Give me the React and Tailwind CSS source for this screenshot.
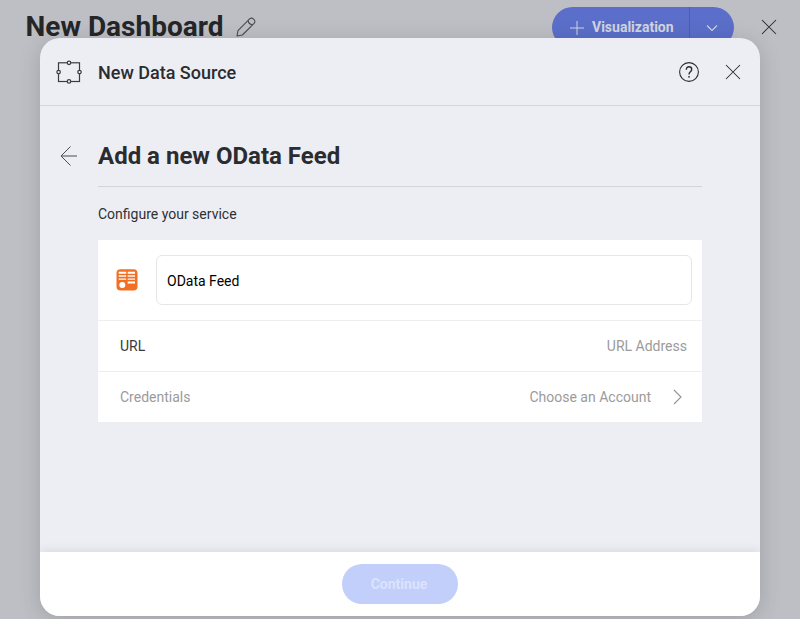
function CloseIcon() {
  return (
    <svg className="size-4 shrink-0" viewBox="0 0 16 16" fill="none" stroke="#2b2c2f" strokeWidth="1.05">
      <path d="M1 1 15 15M15 1 1 15" />
    </svg>
  );
}

function HelpIcon() {
  return (
    <svg className="size-5 shrink-0" viewBox="0 0 20 20" fill="none" stroke="#2b2c2f" strokeWidth="1.1">
      <circle cx="10" cy="10" r="9.400" />
      <path d="M7.300 7.700c0-1.900 1.200-2.900 2.700-2.900s2.700 1 2.700 2.600c0 2.300-2.700 2.300-2.700 5" strokeWidth="1.400" />
      <circle cx="10" cy="14.800" r=".9" fill="#2b2c2f" stroke="none" />
    </svg>
  );
}

function PencilIcon() {
  return (
    <svg className="size-5 shrink-0" viewBox="0 0 20 20" fill="none" stroke="#4b4c50" strokeWidth="1.1" strokeLinejoin="round">
      <path d="M1 19 2 13.6 13.6 1.9a2.6 2.6 0 0 1 3.7 0l.8.8a2.6 2.6 0 0 1 0 3.7L6.4 18 1 19ZM12.2 3.4c.2 2.500 1.800 4.300 4.500 4.400" />
    </svg>
  );
}

function DataSourceIcon() {
  return (
    <svg className="h-6 w-[26px] shrink-0" viewBox="0 0 26 24" stroke="#3b3c40" strokeWidth="1.2">
      <rect x="2.500" y="2.800" width="21" height="18.700" fill="none" />
      <g fill="#edeef4">
        <circle cx="13" cy="2.800" r="1.750" />
        <circle cx="13" cy="21.400" r="1.750" />
        <circle cx="2.600" cy="12.100" r="1.750" />
        <circle cx="23.500" cy="12.100" r="1.750" />
      </g>
    </svg>
  );
}

function FeedIcon() {
  return (
    <svg className="size-[22px] shrink-0" viewBox="0 0 22 22">
      <rect x=".5" y=".2" width="21" height="21.300" rx="4" fill="#f37022" />
      <g fill="#fff">
        <path d="M2.700 2.700h7.500v2H2.700zM2.700 6.300h7.500v1.500H2.700zM2.700 9.500h7.500v1.300H2.700zM11.700 2.700h7.300v2h-7.300zM11.700 6.300h7.300v1.500h-7.300zM11.700 9.500h7.300v1.300h-7.300zM11.700 12.500h7.300v1.900h-7.300z" />
        <circle cx="6.300" cy="15.900" r="3" />
      </g>
    </svg>
  );
}

function Toolbar() {
  return (
    <div className="flex h-[54px] items-center pr-6 pl-[25.500px]">
      <h1 className="text-[28px] leading-none font-bold text-[#252628]">New Dashboard</h1>
      <div className="ml-[13px]">
        <PencilIcon />
      </div>
      <div className="mt-px ml-auto flex h-[41px] w-[182px] overflow-hidden rounded-full bg-[#5b6fca] text-[#d3d5df]">
        <div className="flex w-[138px] items-center border-r border-[#4b5db0] pl-[18px] text-[14px] font-bold">
          <svg className="mr-2 size-3.5 shrink-0" viewBox="0 0 14 14" stroke="currentColor" strokeWidth="1">
            <path d="M7 0v14M0 7h14" />
          </svg>
          Visualization
        </div>
        <div className="flex flex-1 items-center justify-center">
          <svg className="h-1.5 w-3" viewBox="0 0 12 6" fill="none" stroke="currentColor" strokeWidth="1.1">
            <path d="m1 .5 5 5 5-5" />
          </svg>
        </div>
      </div>
      <div className="ml-[27px] w-[15px]">
        <CloseIcon />
      </div>
    </div>
  );
}

function DialogHeader() {
  return (
    <header className="flex h-[68px] items-center border-b border-[#d6d7dc] pr-[19px] pl-4">
      <DataSourceIcon />
      <h2 className="mt-0.5 ml-4 text-[18px] leading-6 font-medium text-[#2b2c2f]">New Data Source</h2>
      <div className="ml-auto">
        <HelpIcon />
      </div>
      <div className="ml-[26px]">
        <CloseIcon />
      </div>
    </header>
  );
}

function Dialog() {
  return (
    <div className="absolute top-[38px] left-10 flex h-[578px] w-[720px] flex-col overflow-hidden rounded-[20px] bg-[#edeef4] shadow-[0_4px_22px_rgba(0,0,0,0.16)]">
      <DialogHeader />
      <main className="flex-1 px-[58px] text-[14px]">
        <div className="flex h-[81px] items-center border-b border-[#d3d4da] pt-[19px]">
          <svg className="mr-[21px] -ml-[38px] h-5 w-[17px] shrink-0" viewBox="0 0 17 20" fill="none" stroke="#4b4c50" strokeWidth="1">
            <path d="M17 10H1M10.500 .5 1 10l9.500 9.500" />
          </svg>
          <h3 className="text-[24px] leading-7 font-bold text-[#2b2c2f]">Add a new OData Feed</h3>
        </div>
        <p className="flex h-[53px] items-center pt-0.5 text-[#2f3033]">Configure your service</p>
        <section className="bg-white">
          <div className="flex h-[81px] items-center border-b border-[#eeeeef] pr-2.5 pl-[18px]">
            <FeedIcon />
            <div className="ml-[18px] flex h-[50px] flex-1 items-center rounded-md border border-[#e6e6e8] pt-[3px] pl-2.5 text-black">
              OData Feed
            </div>
          </div>
          <div className="flex h-[51px] items-center justify-between border-b border-[#eeeeef] pt-px pr-[15px] pl-[22px]">
            <span className="text-[#3a3a3c]">URL</span>
            <span className="text-[#9b9b9b]">URL Address</span>
          </div>
          <div className="flex h-[50px] items-center pt-px pr-[19px] pl-[22px] text-[#9b9b9b]">
            <span>Credentials</span>
            <span className="ml-auto">Choose an Account</span>
            <svg className="mr-px mb-px ml-[22px] h-4 w-[9px]" viewBox="0 0 9 16" fill="none" stroke="#929292" strokeWidth="1.1">
              <path d="m1 1 7 7-7 7" />
            </svg>
          </div>
        </section>
      </main>
      <footer className="flex h-16 items-center justify-center bg-white shadow-[0_-1px_10px_rgba(0,0,0,0.09)]">
        <div className="flex h-10 w-[116px] items-center justify-center rounded-full bg-[#c3cffb] pr-0.5 text-[14px] font-bold text-[#dce2fd]">
          Continue
        </div>
      </footer>
    </div>
  );
}

export default function App() {
  return (
    <div className="relative h-[619px] w-[800px] overflow-hidden bg-[#bebfc5] font-[Roboto,sans-serif]">
      <Toolbar />
      <Dialog />
    </div>
  );
}
